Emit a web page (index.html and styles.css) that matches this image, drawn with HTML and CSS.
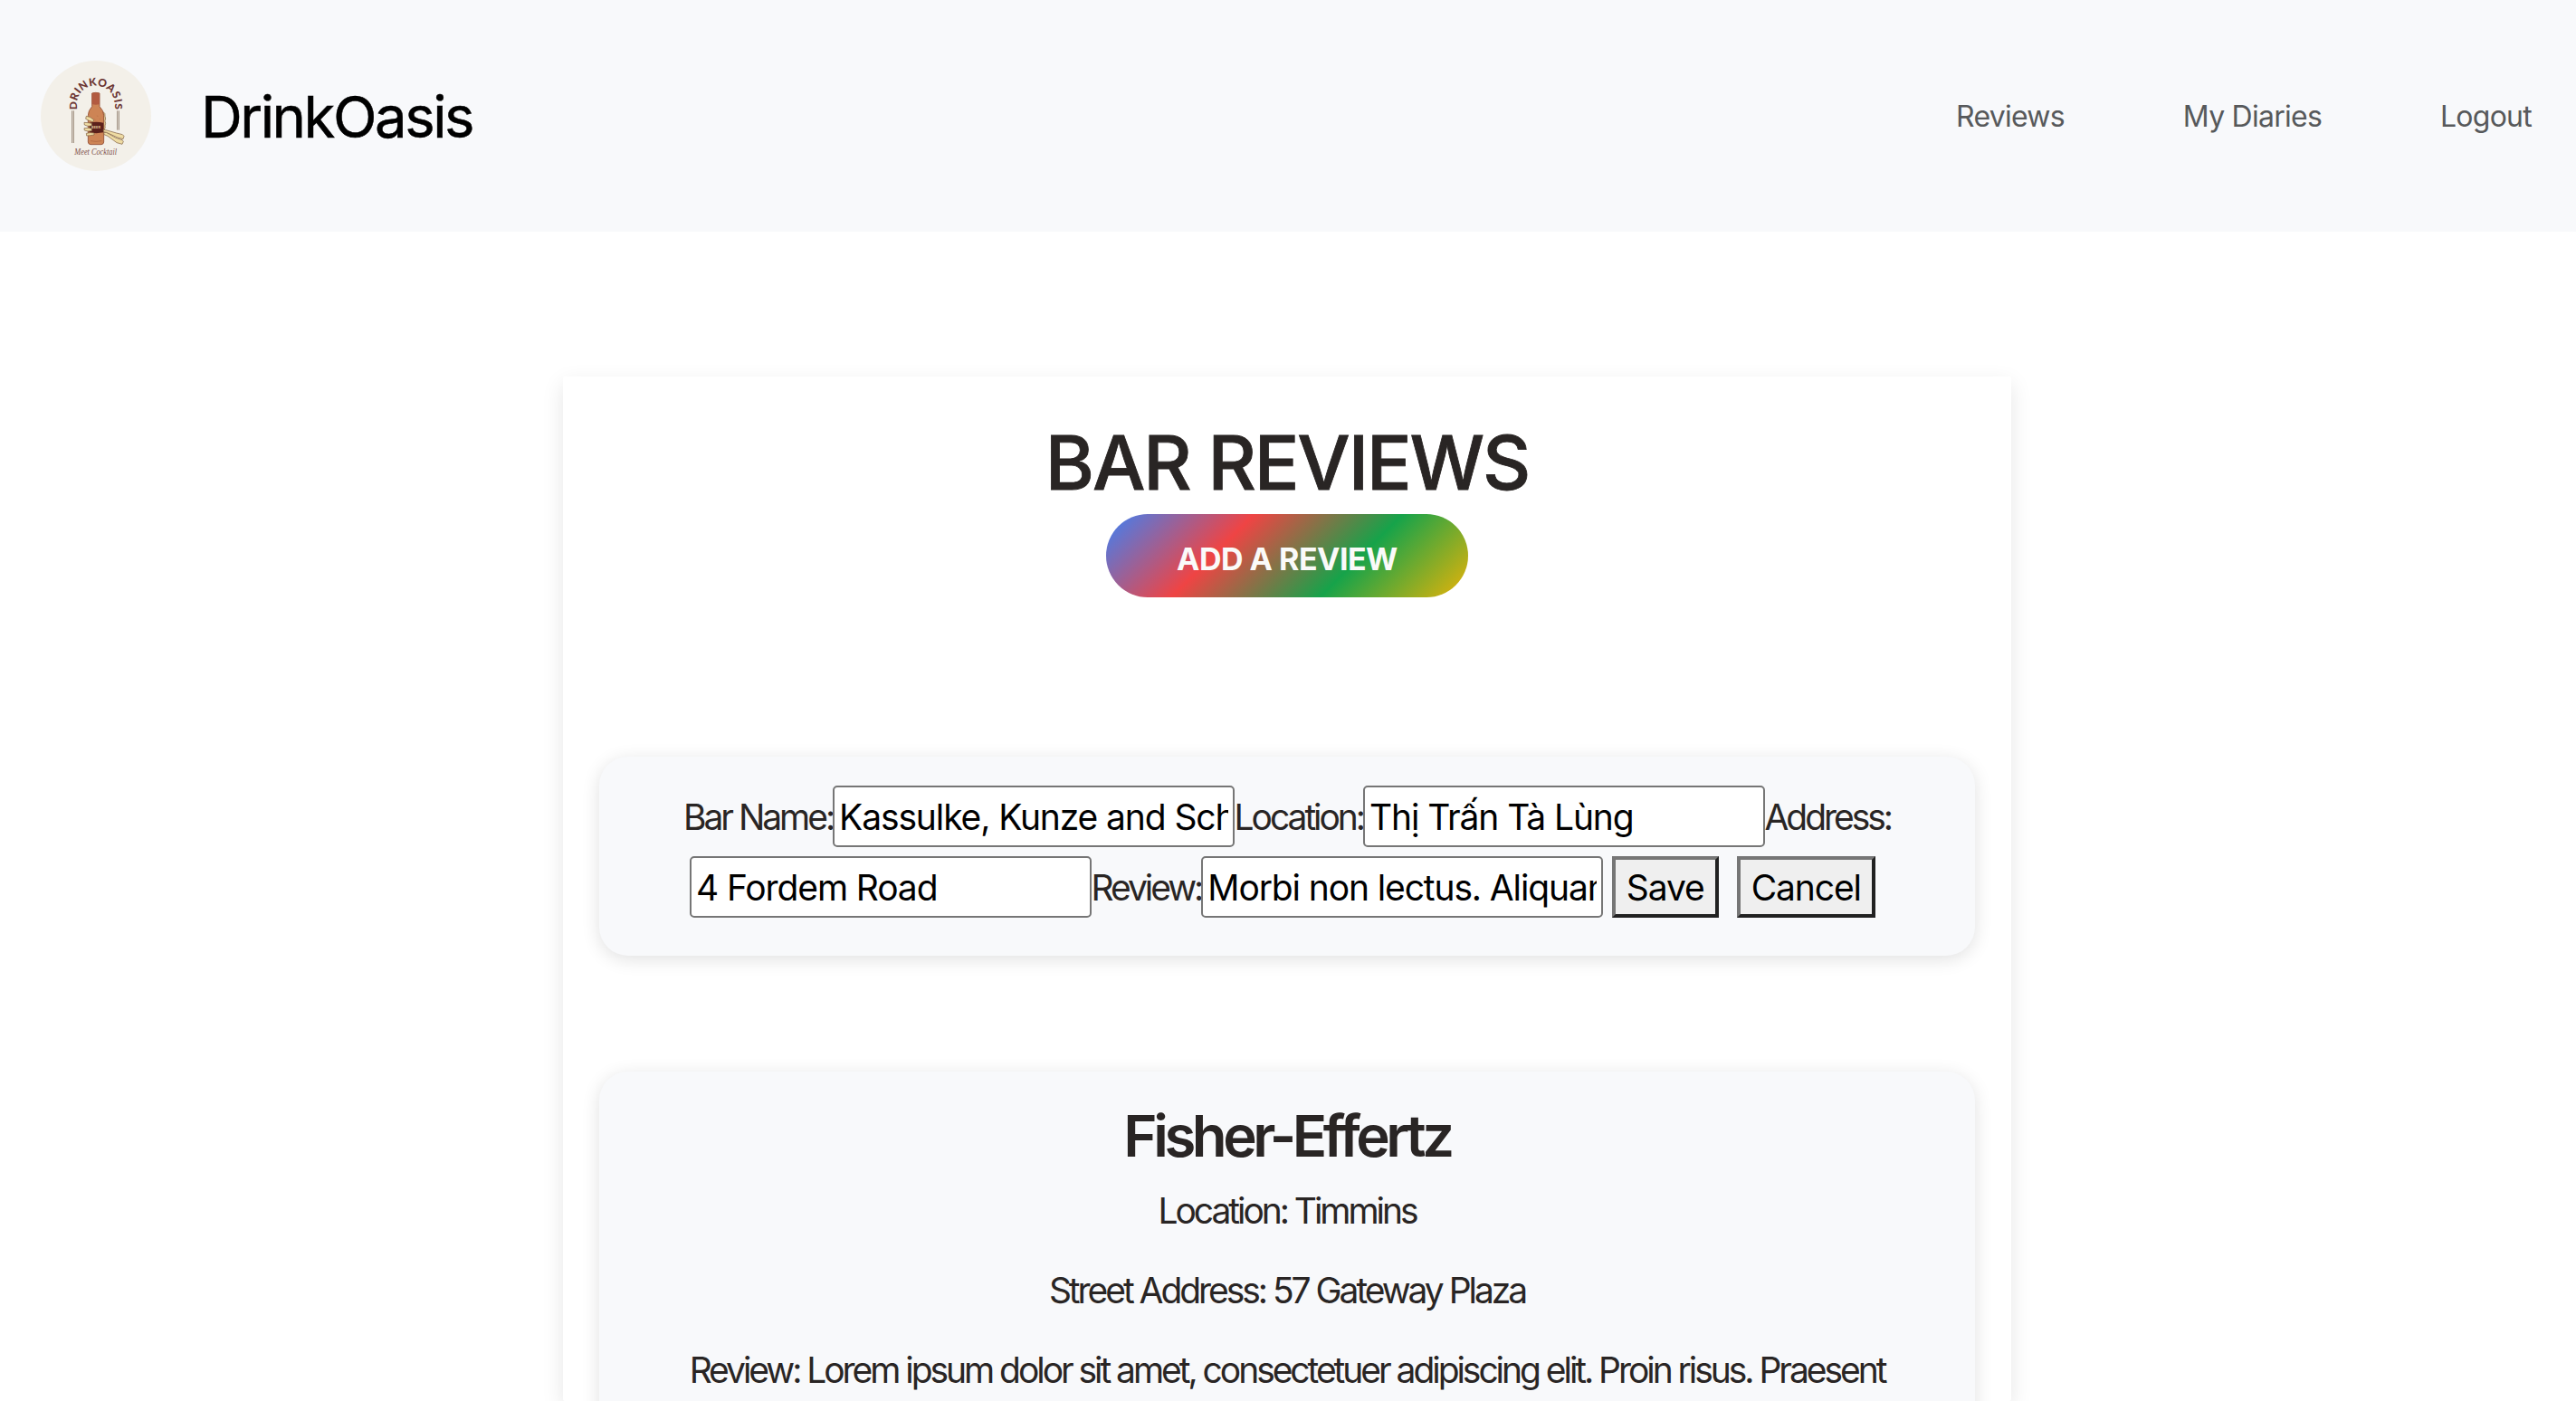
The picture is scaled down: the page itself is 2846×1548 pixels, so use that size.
FILE: index.html
```html
<!DOCTYPE html>
<html lang="en">
<head>
  <meta charset="utf-8">
  <title>DrinkOasis</title>
  <link rel="stylesheet" href="styles.css">
</head>
<body>
  <header class="navbar">
    <a class="brand">
      <svg class="brand-logo" viewBox="75 80 366 366" aria-hidden="true">
        <circle cx="258" cy="263" r="183" fill="#f3f0e9"/>
        <path id="arch" d="M194 243V226A63 63 0 0 1 320 226V244" fill="none"/>
        <text class="logo-arch"><textPath href="#arch" textLength="230">DRINKOASIS</textPath></text>
        <path d="M179 246V353M184 246V353M329 246V310M334 246V310" stroke="#8a7866" stroke-width="2.6"/>
        <path d="M282 250q8 4 6 14q4 8 0 16q4 8 0 16q4 8-6 16z" fill="#ead7a0" stroke="#7c5a3c" stroke-width="2"/>
        <path d="M245 188q12-4 25 0v44q14 14 14 30v88q0 7-8 8h-36q-8-1-8-8v-88q0-16 13-30z" fill="#cd8455" stroke="#8f4a33" stroke-width="2.5"/>
        <path d="M245 188q12-4 25 0v36q-12 4-25 0z" fill="#b25a40"/>
        <path d="M240 346q18 4 37 0M262 262l2 3M270 272l2 2M254 275l2 2" stroke="#a9603c" stroke-width="2" fill="none"/>
        <path d="M236 286q22-5 47 0v32q-24 5-47 0z" fill="#5b211c"/>
        <text class="logo-label" x="243" y="306" textLength="30">BEER</text>
        <g fill="#eedba3" stroke="#7c5a3c" stroke-width="2" stroke-linejoin="round">
          <path d="M226 264l12 3 13 9-3 7-13-4-11-6z"/>
          <path d="M219 285l13 1 12 2v8l-13 1-11-4z"/>
          <path d="M219 304l13-1 12 2v8l-13 1-11-3z"/>
          <path d="M226 321l13-2 13 1v6l-13 2-12 1z"/>
          <path d="M282 309l9 1 35 10 20 5 5 5-3 10-18-5-35-16-11-3z"/>
          <path d="M284 319l8-1 32 18 21 7 4 5-4 9-18-5-30-22-12-5z"/>
        </g>
        <text class="logo-tagline" x="187" y="391" textLength="140" lengthAdjust="spacingAndGlyphs">Meet Cocktail</text>
      </svg>
      <span class="brand-name">DrinkOasis</span>
    </a>
    <nav class="nav-links">
      <a>Reviews</a>
      <a>My Diaries</a>
      <a>Logout</a>
    </nav>
  </header>

  <main class="reviews">
    <h1 class="reviews-title">BAR REVIEWS</h1>
    <button class="add-review" type="button">ADD A REVIEW</button>

    <form class="card edit-form">
      <label for="bar">Bar Name:</label>
      <input id="bar" type="text" value="Kassulke, Kunze and Schmidt">
      <label for="location">Location:</label>
      <input id="location" type="text" value="Thị Trấn Tà Lùng">
      <label for="address">Address:</label>
      <input id="address" type="text" value="4 Fordem Road">
      <label for="review">Review:</label>
      <input id="review" type="text" value="Morbi non lectus. Aliquam sit amet diam">
      <button class="form-button" type="button">Save</button>
      <button class="form-button" type="button">Cancel</button>
    </form>

    <article class="card review">
      <h2>Fisher-Effertz</h2>
      <p>Location: Timmins</p>
      <p>Street Address: 57 Gateway Plaza</p>
      <p>Review: Lorem ipsum dolor sit amet, consectetuer adipiscing elit. Proin risus. Praesent</p>
    </article>
  </main>
</body>
</html>
```
FILE: styles.css
```css
* {
  box-sizing: border-box;
}

body {
  margin: 0;
  height: 1548px;
  overflow: hidden;
  background: #fff;
  color: #292524;
  font-family: "Inter", "Liberation Sans", sans-serif;
  font-size: 39px;
  letter-spacing: -3.05px;
}

.navbar {
  display: flex;
  align-items: center;
  justify-content: space-between;
  height: 256px;
  padding: 0 49px 0 45px;
  background: #f8f9fb;
}

.brand {
  display: flex;
  align-items: center;
  gap: 55px;
}

.brand-logo {
  width: 122px;
  height: 122px;
}

.logo-arch {
  font: 900 36px "Lato", sans-serif;
  letter-spacing: 0;
  fill: #6b3532;
}

.logo-label {
  font: 700 12px "Lato", sans-serif;
  letter-spacing: 0;
  fill: #e5cfa0;
}

.logo-tagline {
  font: italic 400 30px "Liberation Serif", serif;
  letter-spacing: 0;
  fill: #80504d;
}

.brand-name {
  color: #000;
  font-size: 63.5px;
  letter-spacing: -2.5px;
  -webkit-text-stroke: 0.5px #000;
}

.nav-links {
  display: flex;
  gap: 131px;
  color: #57595b;
  font-size: 32px;
  letter-spacing: -0.75px;
}

.reviews {
  display: flex;
  flex-direction: column;
  align-items: center;
  width: 1600px;
  height: 1132px;
  margin: 160px auto 0 622px;
  padding: 46px 40px 0;
  border-radius: 2px;
  box-shadow: 0 8px 24px rgba(0, 0, 0, 0.1);
}

.reviews-title {
  margin: 0 0 8px;
  font-size: 82.5px;
  font-weight: 500;
  line-height: 98px;
  letter-spacing: -2.15px;
  -webkit-text-stroke: 0.8px #292524;
}

.add-review {
  flex: none;
  width: 400px;
  height: 92px;
  padding: 7px 0 0;
  border: 0;
  border-radius: 46px;
  background: linear-gradient(135deg, #3b82f6, #ef4444, #16a34a, #eab308);
  color: #fafaf9;
  font: 700 34px "Inter", sans-serif;
  letter-spacing: -0.5px;
}

.card {
  flex: none;
  width: 1520px;
  border-radius: 32px;
  background: #f8f9fb;
  box-shadow: 0 4px 20px rgba(0, 0, 0, 0.12);
}

.edit-form {
  display: flex;
  flex-wrap: wrap;
  align-items: center;
  align-content: flex-start;
  justify-content: center;
  row-gap: 10px;
  height: 220px;
  margin-top: 176px;
  padding-top: 32px;
}

.edit-form input {
  width: 443.5px;
  height: 68px;
  padding: 0 5px;
  border: 2px solid #767676;
  border-radius: 5px;
  background: #fff;
  color: #000;
  font: 400 39px "Inter", sans-serif;
  letter-spacing: -1.12px;
}

.form-button {
  height: 68px;
  margin: 0 10px;
  padding: 0 12px;
  border: 4px solid;
  border-color: #767676 #212121 #212121 #767676;
  background: #efefef;
  color: #000;
  font: 400 39px "Inter", sans-serif;
  letter-spacing: -1.1px;
}

.review {
  height: 420px;
  margin-top: 128px;
  padding-top: 32px;
  text-align: center;
}

.review h2 {
  margin: 0 0 14px;
  font-size: 63.5px;
  font-weight: 600;
  line-height: 78px;
  letter-spacing: -4.45px;
}

.review p {
  margin: 0 0 28px;
  line-height: 60px;
}
```
